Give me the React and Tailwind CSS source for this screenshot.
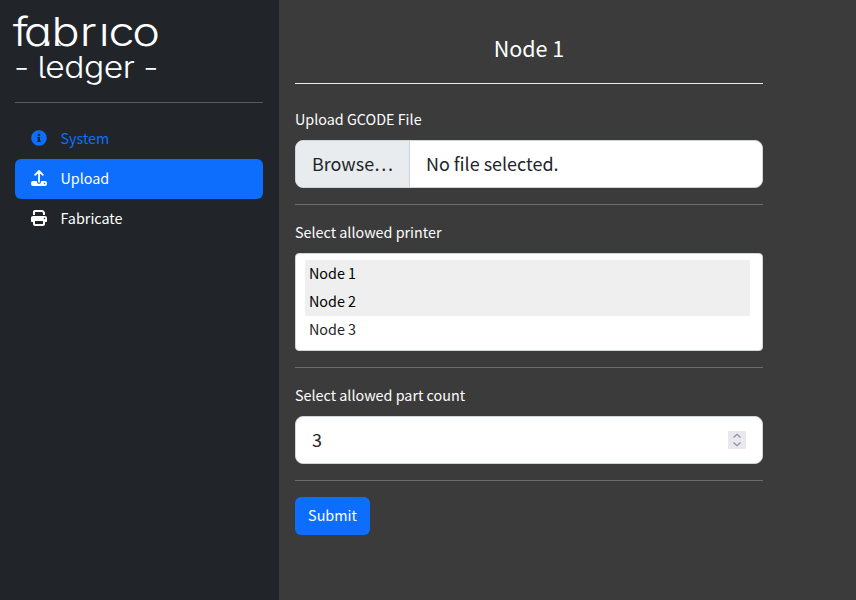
import { FaInfoCircle } from "react-icons/fa";
import { FaPrint } from "react-icons/fa6";

function UploadIcon() {
  return (
    <svg width="16" height="16" viewBox="0 0 16 16" fill="none">
      <path d="M8 11.8V1.6M4.2 4.8 8 1l3.8 3.8" stroke="currentColor" strokeWidth="1.8" strokeLinecap="round" strokeLinejoin="round" />
      <path fillRule="evenodd" fill="currentColor" d="M2 11h3.9v.8a2.1 2.1 0 0 0 4.2 0V11H14a2 2 0 0 1 2 2v1a2 2 0 0 1-2 2H2a2 2 0 0 1-2-2v-1a2 2 0 0 1 2-2Zm11.5 1.75a.75.75 0 1 0 0 1.5.75.75 0 0 0 0-1.5Z" />
    </svg>
  );
}

function Logo() {
  return (
    <svg width="150" height="74" viewBox="0 0 150 74" fill="#fff" className="block overflow-visible font-['Inter',sans-serif] font-light">
      <text transform="scale(1.17 1)" x="-2 7.5 31.2 55.3 71.6 79.9 100.2" y="31.7" fontSize="40" className="[font-feature-settings:'cv11']">fabrico</text>
      <rect x="84" y="0" width="9" height="7" fill="#212529" />
      <path d="M34.300 26v5.800h-6.500q5-1 6.500-5.800ZM40.500 26v5.800h6.500q-5-1-6.500-5.800Z" />
      <text transform="scale(1.12 1)" x="-1" y="64.500" fontSize="30" textLength="129" lengthAdjust="spacing" className="[font-feature-settings:'cv05']">- ledger -</text>
    </svg>
  );
}

function NavItem({ icon, label, className }) {
  return (
    <a className={`flex h-10 items-center rounded-md px-4 ${className}`}>
      <span className="-mt-0.5 mr-[13.5px] w-4">{icon}</span>
      <span className="-mt-0.5">{label}</span>
    </a>
  );
}

function Divider({ className = "bg-[#6c6c6c]" }) {
  return <div className={`h-px ${className}`} />;
}

export default function App() {
  return (
    <div className="flex h-[600px] w-[856px] bg-[#3b3b3b] font-['Noto_Sans_CJK_JP',sans-serif] text-[14.35px] leading-6 text-white">
      <aside className="w-[279px] bg-[#212529] px-[15px] pr-4 pt-[14px]">
        <Logo />
        <Divider className="mt-[14px] bg-[#585b5e]" />
        <nav className="mt-4">
          <NavItem icon={<FaInfoCircle size={16} />} label="System" className="text-[#0d6efd]" />
          <NavItem icon={<UploadIcon />} label="Upload" className="bg-[#0d6efd]" />
          <NavItem icon={<FaPrint size={16} />} label="Fabricate" className="" />
        </nav>
      </aside>
      <main className="ml-4 w-[468px]">
        <h1 className="pt-[33px] text-center text-[21.5px] leading-[30px]">Node 1</h1>
        <Divider className="mt-5 bg-[#ebebeb]" />
        <div className="mt-[23px]">Upload GCODE File</div>
        <div className="mt-[9px] flex h-12 items-center overflow-hidden rounded-lg border border-[#ced4da] bg-white text-[17.95px] text-[#212529]">
          <div className="flex h-full w-[114px] items-center border-r border-[#ced4da] bg-[#e9ecef] pb-0.5 pl-4">Browse…</div>
          <div className="pb-0.5 pl-4">No file selected.</div>
        </div>
        <Divider className="mt-4 bg-[#6c6c6c]" />
        <div className="mt-[15px]">Select allowed printer</div>
        <div className="mt-[9px] h-[98px] rounded border border-[#ced4da] bg-white pl-[9px] pr-3 pt-1.5 text-[#212529]">
          <div className="h-7 bg-[#efefef] pl-1 leading-[26px] text-black">Node 1</div>
          <div className="h-7 bg-[#efefef] pl-1 leading-[26px] text-black">Node 2</div>
          <div className="h-7 pl-1 leading-[26px]">Node 3</div>
        </div>
        <Divider className="mt-4 bg-[#6c6c6c]" />
        <div className="mt-[15px]">Select allowed part count</div>
        <div className="mt-[9px] flex h-12 items-center justify-between rounded-lg border border-[#ced4da] bg-white px-4 text-[17.95px] text-[#212529]">
          <span className="pb-0.5">3</span>
          <svg width="18" height="18" viewBox="0 0 18 18" fill="none" className="bg-[#e9e9ed]">
            <path d="M5.500 6.500 9 3.300l3.500 3.200M5.500 11.500 9 14.700l3.500-3.200" stroke="#8f8f9d" strokeWidth="1.3" />
          </svg>
        </div>
        <Divider className="mt-4 bg-[#6c6c6c]" />
        <button className="mt-4 flex h-[38px] w-[75px] items-center justify-center rounded-md bg-[#0d6efd] pb-0.5">Submit</button>
      </main>
    </div>
  );
}
